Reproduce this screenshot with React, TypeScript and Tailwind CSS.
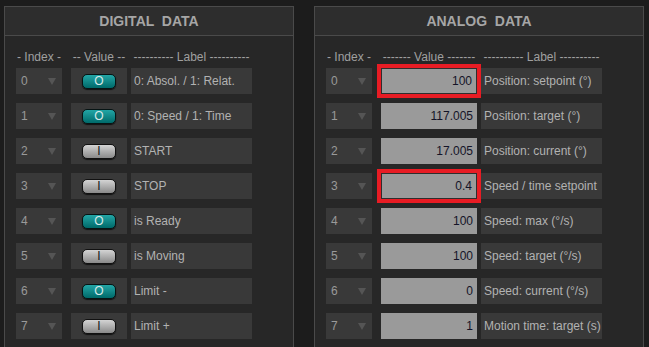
import React from "react";

const digital = [
  { on: true, label: "0: Absol. / 1: Relat." },
  { on: true, label: "0: Speed / 1: Time" },
  { on: false, label: "START" },
  { on: false, label: "STOP" },
  { on: true, label: "is Ready" },
  { on: false, label: "is Moving" },
  { on: true, label: "Limit -" },
  { on: false, label: "Limit +" },
];

const analog = [
  { value: "100", label: "Position: setpoint (°)", mark: true },
  { value: "117.005", label: "Position: target (°)" },
  { value: "17.005", label: "Position: current (°)" },
  { value: "0.4", label: "Speed / time setpoint", mark: true },
  { value: "100", label: "Speed: max (°/s)" },
  { value: "100", label: "Speed: target (°/s)" },
  { value: "0", label: "Speed: current (°/s)" },
  { value: "1", label: "Motion time: target (s)" },
];

function IndexBox({ n }: { n: number }) {
  return (
    <div className="w-[46px] h-[26px] bg-[#393939] flex items-center justify-between pl-[5px] pr-[6px] text-[#9a9a9a]">
      <span>{n}</span>
      <svg width="8" height="7" viewBox="0 0 8 7">
        <polygon points="0,0 8,0 4,7" fill="#555555" />
      </svg>
    </div>
  );
}

function Toggle({ on }: { on: boolean }) {
  return on ? (
    <div className="w-[34px] h-[15px] rounded-[5px] border border-[#061414] bg-gradient-to-b from-[#22a6a6] to-[#006a6a] shadow-[0_1px_1px_rgba(0,0,0,0.7)] flex items-center justify-center text-[12px] leading-none text-[#d8e8e8]">
      O
    </div>
  ) : (
    <div className="w-[34px] h-[15px] rounded-[5px] border border-[#111] bg-gradient-to-b from-[#d4d4d4] to-[#8a8a8a] shadow-[0_1px_1px_rgba(0,0,0,0.7)] flex items-center justify-center text-[12px] leading-none text-[#151515]">
      I
    </div>
  );
}

function Panel({ title, width, children }: { title: string; width: string; children: React.ReactNode }) {
  return (
    <div className={`${width} h-[360px] border border-[#4a4a4a] bg-[#272727] shrink-0`}>
      <div className="h-[29px] border-b border-[#4a4a4a] bg-[#2d2d2d] flex items-center justify-center text-[14px] font-bold text-[#a6a6a6] whitespace-pre">
        {title}
      </div>
      <div className="pl-[11px] pt-[14px]">{children}</div>
    </div>
  );
}

export default function App() {
  return (
    <div
      className="w-[649px] h-[347px] overflow-hidden bg-[#1c1c1c] pl-[4px] pt-[6px] flex gap-[20px] text-[12px]"
      style={{ fontFamily: '"Liberation Sans", Arial, sans-serif' }}
    >
      <Panel title="DIGITAL  DATA" width="w-[290px]">
        <div className="flex text-[#a0a0a0] h-[14px] leading-[14px] mb-[4px] whitespace-nowrap">
          <div className="w-[46px] text-center">- Index -</div>
          <div className="w-[56px] ml-[9px] text-center">-- Value --</div>
          <div className="w-[121px] ml-[4px] text-center">---------- Label ----------</div>
        </div>
        <div className="flex flex-col gap-[9px]">
          {digital.map((r, i) => (
            <div key={i} className="flex">
              <IndexBox n={i} />
              <div className="w-[56px] h-[26px] ml-[9px] bg-[#393939] flex items-center justify-center">
                <Toggle on={r.on} />
              </div>
              <div className="w-[121px] h-[26px] ml-[4px] bg-[#393939] flex items-center pl-[3px] text-[#b2b2b2] whitespace-nowrap overflow-hidden">
                {r.label}
              </div>
            </div>
          ))}
        </div>
      </Panel>
      <Panel title="ANALOG  DATA" width="w-[330px]">
        <div className="flex text-[#a0a0a0] h-[14px] leading-[14px] mb-[4px] whitespace-nowrap">
          <div className="w-[46px] text-center">- Index -</div>
          <div className="w-[96px] ml-[9px] text-center">------- Value -------</div>
          <div className="w-[121px] ml-[4px] text-center">---------- Label ----------</div>
        </div>
        <div className="flex flex-col gap-[9px]">
          {analog.map((r, i) => (
            <div key={i} className="flex">
              <IndexBox n={i} />
              <div
                className={
                  r.mark
                    ? "w-[96px] h-[26px] ml-[9px] bg-[#9a9a9a] border border-[#2e2e2e] outline-4 outline-[#e81c24] flex items-center justify-end pr-[4px] text-[12px] text-[#141428]"
                    : "w-[96px] h-[26px] ml-[9px] bg-[#9a9a9a] flex items-center justify-end pr-[4px] text-[12px] text-[#141428]"
                }
              >
                {r.value}
              </div>
              <div className="w-[121px] h-[26px] ml-[4px] bg-[#393939] flex items-center pl-[3px] text-[#b2b2b2] whitespace-nowrap overflow-hidden">
                {r.label}
              </div>
            </div>
          ))}
        </div>
      </Panel>
    </div>
  );
}
